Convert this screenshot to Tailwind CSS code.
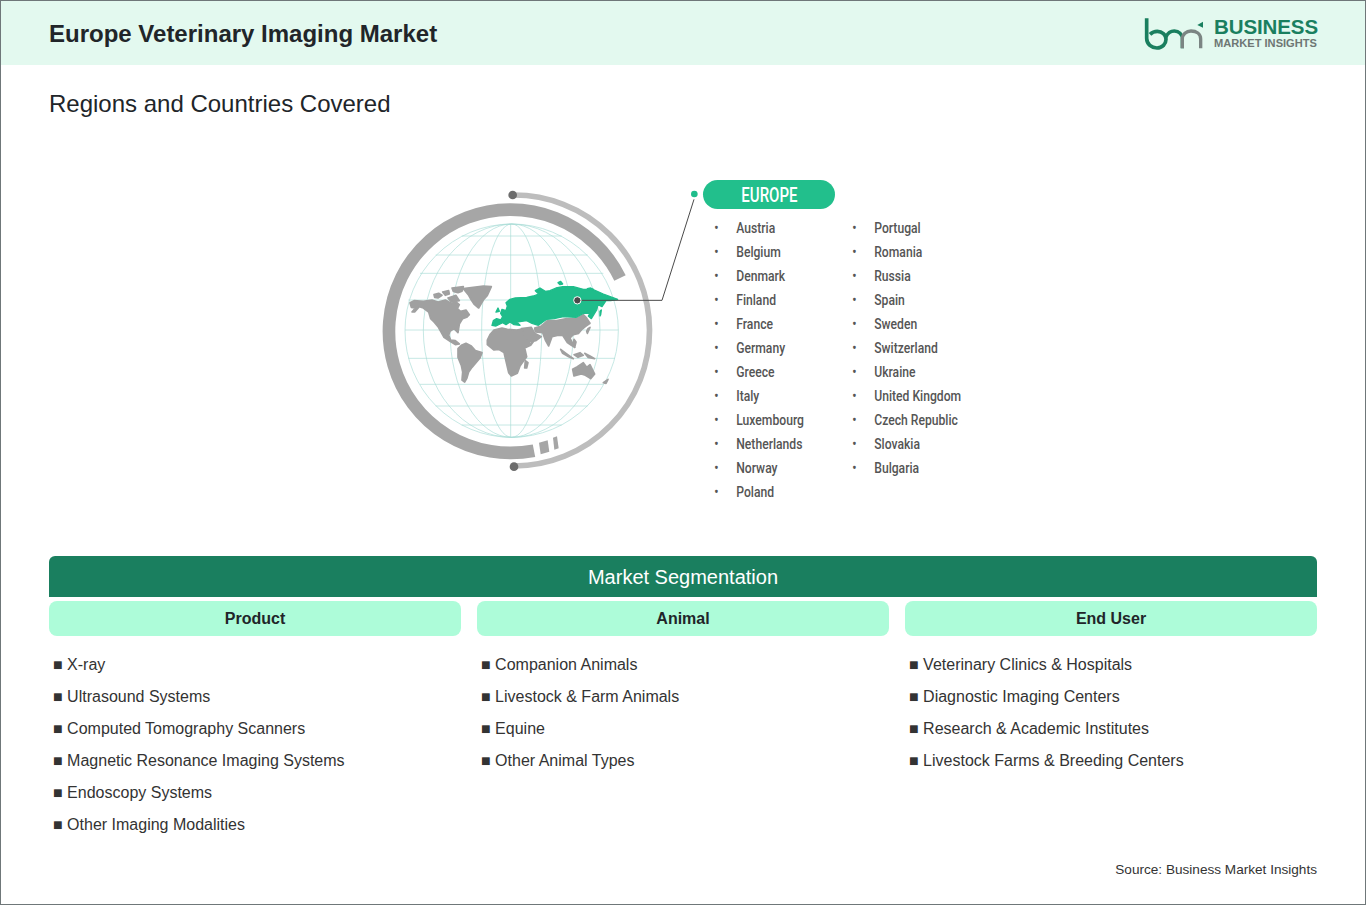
<!DOCTYPE html>
<html lang="en">
<head>
    <meta charset="UTF-8">
    <meta name="viewport" content="width=device-width, initial-scale=1.0">
    <title>Europe Veterinary Imaging Market</title>
    <script src="https://cdn.jsdelivr.net/npm/@tailwindcss/browser@4"></script>
</head>
<body class="bg-white font-['Liberation_Sans',Arial,sans-serif] text-[#212529]">
<div class="w-[1366px] h-[905px] border border-[#6f7779] overflow-hidden">

    <!-- Header -->
    <header class="h-[64px] bg-[#e3f9ef] flex items-center justify-between pl-[48px] pr-[48px]">
        <h1 class="text-[24px] font-bold pt-[2px]">Europe Veterinary Imaging Market</h1>
        <div class="flex items-center gap-[8px] pt-[1px]">
            <svg width="62" height="35" viewBox="45 45 186 105" fill="none">
                <path d="M53 52V112C53 130 68 141 84 141C100 141 111 129 111 115C111 101 99 91 85 91C76 91 69 94 63 100" stroke="#1a7f5f" stroke-width="11"/>
                <path d="M111 108C116 96 126 90 136 90C150 90 160 100 160 114V142" stroke="#1a7f5f" stroke-width="10"/>
                <path d="M160 142V114C160 100 172 90 186 90C202 90 215 98 215 114V142" stroke="#7b8583" stroke-width="10"/>
                <path d="M205 72L222 62V80Z" fill="#1a7f5f"/>
            </svg>
            <div class="flex flex-col w-[103px]">
                <span class="text-[20.5px] leading-[20px] font-bold text-[#1a7f5f] tracking-[-0.1px]">BUSINESS</span>
                <span class="text-[11.1px] leading-[13px] font-bold text-[#6e7774] whitespace-nowrap">MARKET INSIGHTS</span>
            </div>
        </div>
    </header>

    <h2 class="ml-[48px] mt-[24px] text-[24px] leading-[30px]">Regions and Countries Covered</h2>

    <!-- Map and country list -->
    <section class="flex mt-[51px] pl-[369px] h-[386px]">
        <svg class="w-[333px] h-[310px] shrink-0" viewBox="0 0 999 930" fill="none">
            <!-- rings -->
            <path d="M750 324A365 365 0 1 0 492 842" stroke="#a6a6a6" stroke-width="38"/>
            <path d="M507 818L533 811L538 845L512 853Z" fill="#a6a6a6"/>
            <path d="M549 803L561 799L566 835L553 839Z" fill="#a6a6a6"/>
            <path d="M430 75A406 406 0 0 1 434 888" stroke="#bdbdbd" stroke-width="17"/>
            <circle cx="428" cy="75" r="13" fill="#6d6d6d"/>
            <circle cx="432" cy="890" r="13" fill="#6d6d6d"/>

            <!-- globe grid -->
            <g stroke="#a9dcd6" stroke-width="2">
                <circle cx="425" cy="482" r="320"/>
                <ellipse cx="425" cy="482" rx="265" ry="320"/>
                <ellipse cx="425" cy="482" rx="185" ry="320"/>
                <ellipse cx="425" cy="482" rx="90" ry="320"/>
                <path d="M422 162V802"/>
                <path d="M275 198H575M197 255H653M150 310H700M115 390H735M105 480H745M115 565H735M150 643H700M197 708H653M275 765H575"/>
            </g>

            <!-- land -->
            <g fill="#a0a0a0" stroke="#a0a0a0" stroke-width="5" stroke-linejoin="round">
                <path d="M120 398L132 392L160 394L186 390L204 396L226 390L244 400L258 396L268 404L262 416L272 424L288 420L298 434L290 442L278 446L268 462L264 488L252 476L240 484L236 496L242 510L256 512L268 522L256 524L240 514L222 502L212 484L204 470L192 456L182 446L176 426L160 414L148 410L134 426L126 426L136 414L124 412Z"/>
                <path d="M280 356L310 352L340 348L364 350L352 376L340 390L326 414L312 402L304 390L296 376Z"/>
                <path d="M192 374L206 370L216 376L204 384L194 382Z"/>
                <path d="M218 366L236 362L238 372L226 376Z"/>
                <path d="M246 354L280 350L276 364L264 368L250 364Z"/>
                <path d="M234 384L258 376L268 392L244 396Z"/>
                <path d="M264 536L274 526L288 520L304 528L316 542L336 548L330 564L318 578L306 592L296 606L290 626L284 636L276 630L278 606L274 586L264 562Z"/>
                <path d="M352 510L360 494L372 480L396 474L412 478L440 480L452 478L466 498L480 522L492 512L482 526L464 534L470 560L460 574L450 588L442 610L424 618L416 608L410 582L402 548L386 538L372 540L352 524Z"/>
                <path d="M466 572L474 578L470 594L464 594Z"/>
                <path d="M454 476L484 472L494 490L514 500L498 512L478 514L462 492Z"/>
                <path d="M494 474L514 468L532 452L560 452L590 446L618 446L640 434L648 442L660 460L646 470L636 478L626 490L610 494L600 504L614 532L604 526L592 518L578 496L562 496L546 500L536 528L526 510L518 488L496 486Z"/>
                <path d="M572 538L588 550L610 566L596 560L578 550Z"/>
                <path d="M612 554L630 548L640 556L624 562Z"/>
                <path d="M644 550L660 558L674 566L654 562Z"/>
                <path d="M612 508L618 516L614 532L610 522Z"/>
                <path d="M654 476L660 472L652 490L650 484Z"/>
                <path d="M608 598L622 590L640 578L650 592L660 584L674 612L662 626L646 616L634 612L612 618Z"/>
                <path d="M700 638L714 628L708 640Z"/>
            </g>
            <g fill="#1fbd8b" stroke="#1fbd8b" stroke-width="4" stroke-linejoin="round">
                <path d="M366 466L370 452L380 446L392 450L398 440L392 430L396 418L408 422L412 408L408 398L420 388L436 384L470 382L490 378L506 372L496 362L510 354L526 364L540 362L558 354L578 350L610 350L640 358L668 358L700 372L743 388L722 392L708 392L696 410L684 404L680 420L664 446L655 438L660 430L640 430L618 442L580 440L552 446L530 448L505 466L486 460L470 452L440 456L450 466L432 464L420 456L408 464L398 458L378 468Z"/>
                <path d="M378 426L384 414L388 424Z"/>
                <path d="M564 338L572 334L578 342L570 344Z"/>
                <path d="M690 424L694 420L692 434L690 438Z"/>
                <path d="M652 356L662 354L670 358L656 360Z"/>
            </g>

            <!-- pointer -->
            <path d="M622 391H876L972 88" stroke="#4a4a4a" stroke-width="3"/>
            <circle cx="622" cy="391" r="11" fill="#4a4a4a" stroke="#fff" stroke-width="3"/>
            <circle cx="973" cy="72" r="10" fill="#1fbd8b"/>
        </svg>

        <div class="pt-[10px]">
            <div class="w-[132px] h-[29px] rounded-full bg-[#22bf8c] flex items-center justify-center text-white">
                <span class="font-['Roboto',sans-serif] text-[20px] font-medium scale-x-[0.75]">EUROPE</span>
            </div>
            <div class="flex mt-[7px] font-['Roboto',sans-serif] text-[15px] text-[#555] font-medium leading-[24px]">
                <ul class="w-[138px] pl-[14px] shrink-0 origin-left scale-x-[0.81]">
                    <li class="flex"><span class="w-[27px]">•</span>Austria</li>
                    <li class="flex"><span class="w-[27px]">•</span>Belgium</li>
                    <li class="flex"><span class="w-[27px]">•</span>Denmark</li>
                    <li class="flex"><span class="w-[27px]">•</span>Finland</li>
                    <li class="flex"><span class="w-[27px]">•</span>France</li>
                    <li class="flex"><span class="w-[27px]">•</span>Germany</li>
                    <li class="flex"><span class="w-[27px]">•</span>Greece</li>
                    <li class="flex"><span class="w-[27px]">•</span>Italy</li>
                    <li class="flex"><span class="w-[27px]">•</span>Luxembourg</li>
                    <li class="flex"><span class="w-[27px]">•</span>Netherlands</li>
                    <li class="flex"><span class="w-[27px]">•</span>Norway</li>
                    <li class="flex"><span class="w-[27px]">•</span>Poland</li>
                </ul>
                <ul class="pl-[14px] origin-left scale-x-[0.81]">
                    <li class="flex"><span class="w-[27px]">•</span>Portugal</li>
                    <li class="flex"><span class="w-[27px]">•</span>Romania</li>
                    <li class="flex"><span class="w-[27px]">•</span>Russia</li>
                    <li class="flex"><span class="w-[27px]">•</span>Spain</li>
                    <li class="flex"><span class="w-[27px]">•</span>Sweden</li>
                    <li class="flex"><span class="w-[27px]">•</span>Switzerland</li>
                    <li class="flex"><span class="w-[27px]">•</span>Ukraine</li>
                    <li class="flex"><span class="w-[27px]">•</span>United Kingdom</li>
                    <li class="flex"><span class="w-[27px]">•</span>Czech Republic</li>
                    <li class="flex"><span class="w-[27px]">•</span>Slovakia</li>
                    <li class="flex"><span class="w-[27px]">•</span>Bulgaria</li>
                </ul>
            </div>
        </div>
    </section>

    <!-- Market Segmentation -->
    <section class="mx-[48px]">
        <div class="h-[41px] bg-[#1a7f5f] rounded-t-[6px] flex items-center justify-center text-white text-[20px]">Market Segmentation</div>
        <div class="grid grid-cols-3 gap-[16px] mt-[4px]">
            <div>
                <h3 class="h-[35px] bg-[#adfcd9] rounded-[8px] flex items-center justify-center font-bold text-[16px]">Product</h3>
                <ul class="mt-[13px] pl-[4px] text-[16px] leading-[32px] text-[#333]">
                    <li>■ X-ray</li>
                    <li>■ Ultrasound Systems</li>
                    <li>■ Computed Tomography Scanners</li>
                    <li>■ Magnetic Resonance Imaging Systems</li>
                    <li>■ Endoscopy Systems</li>
                    <li>■ Other Imaging Modalities</li>
                </ul>
            </div>
            <div>
                <h3 class="h-[35px] bg-[#adfcd9] rounded-[8px] flex items-center justify-center font-bold text-[16px]">Animal</h3>
                <ul class="mt-[13px] pl-[4px] text-[16px] leading-[32px] text-[#333]">
                    <li>■ Companion Animals</li>
                    <li>■ Livestock &amp; Farm Animals</li>
                    <li>■ Equine</li>
                    <li>■ Other Animal Types</li>
                </ul>
            </div>
            <div>
                <h3 class="h-[35px] bg-[#adfcd9] rounded-[8px] flex items-center justify-center font-bold text-[16px]">End User</h3>
                <ul class="mt-[13px] pl-[4px] text-[16px] leading-[32px] text-[#333]">
                    <li>■ Veterinary Clinics &amp; Hospitals</li>
                    <li>■ Diagnostic Imaging Centers</li>
                    <li>■ Research &amp; Academic Institutes</li>
                    <li>■ Livestock Farms &amp; Breeding Centers</li>
                </ul>
            </div>
        </div>
        <p class="text-right text-[13.6px] leading-[20px] text-[#333] mt-[19px]">Source: Business Market Insights</p>
    </section>
</div>
</body>
</html>
